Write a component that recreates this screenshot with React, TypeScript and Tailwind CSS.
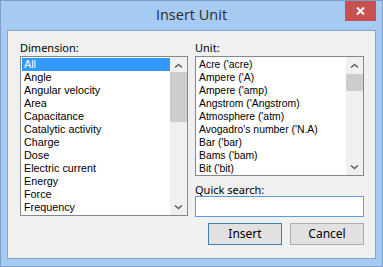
import React from 'react'

const dimensions = [
  'All', 'Angle', 'Angular velocity', 'Area', 'Capacitance', 'Catalytic activity',
  'Charge', 'Dose', 'Electric current', 'Energy', 'Force', 'Frequency',
]

const units = [
  "Acre ('acre)", "Ampere ('A)", "Ampere ('amp)", "Angstrom ('Angstrom)", "Atmosphere ('atm)",
  "Avogadro's number ('N.A)", "Bar ('bar)", "Bams ('bam)", "Bit ('bit)",
]

function Chevron({ down }: { down?: boolean }) {
  return (
    <svg width="9" height="6" viewBox="0 0 9 6">
      <path
        d={down ? 'M1 1.5 L4.5 4.5 L8 1.5' : 'M1 4.5 L4.5 1.5 L8 4.5'}
        fill="none"
        stroke="#606060"
        strokeWidth="1.6"
      />
    </svg>
  )
}

function ScrollBar({ thumbTop, thumbHeight }: { thumbTop: number; thumbHeight: number }) {
  return (
    <div className="w-[17px] bg-[#f0f0f0] flex flex-col relative">
      <div className="h-[17px] flex items-center justify-center">
        <Chevron />
      </div>
      <div className="flex-1" />
      <div className="h-[17px] flex items-center justify-center">
        <Chevron down />
      </div>
      <div
        className="absolute left-0 w-[17px] bg-[#cdcdcd]"
        style={{ top: thumbTop, height: thumbHeight }}
      />
    </div>
  )
}

function ListBox({ items, selected, height, thumbTop, thumbHeight, textClass }: {
  items: string[]; selected?: number; height: number; thumbTop: number; thumbHeight: number; textClass: string
}) {
  return (
    <div className="border border-[#828790] bg-white flex" style={{ height }}>
      <div className="flex-1 pt-px pl-px overflow-hidden">
        {items.map((it, i) => (
          <div
            key={it}
            className={`h-[13px] leading-[13px] pl-[2px] whitespace-nowrap ${textClass} ${
              i === selected ? 'bg-[#3399ff] text-white' : 'text-black'
            }`}
          >
            {it}
          </div>
        ))}
      </div>
      <ScrollBar thumbTop={thumbTop} thumbHeight={thumbHeight} />
    </div>
  )
}

export default function App() {
  return (
    <div className="w-[383px] h-[267px] bg-[#a6cbf3] border border-[#7c9fc9] flex flex-col font-['Open_Sans',sans-serif]">
      {/* Title bar */}
      <div className="h-[29px] relative flex items-center justify-center">
        <span className="text-[14.5px] text-[#2b2b2b] -mt-[1px]">Insert Unit</span>
        <div className="absolute right-[6px] top-0 w-[31px] h-[20px] bg-[#c75050] flex items-center justify-center">
          <svg width="9" height="8" viewBox="0 0 9 8">
            <path d="M1 0.5 L8 7.5 M8 0.5 L1 7.5" stroke="white" strokeWidth="2" />
          </svg>
        </div>
      </div>

      {/* Client area */}
      <div className="mx-[6px] h-[229px] border border-[#86a6cc] bg-[#f0f0f0] pl-[12px] pt-[9px] flex gap-[7px]">
        <div className="w-[168px] flex flex-col">
          <div className="text-[11px] leading-[15px] h-[16px] text-black font-['Noto_Sans',sans-serif]">Dimension:</div>
          <ListBox
            items={dimensions}
            selected={0}
            height={160}
            thumbTop={15}
            thumbHeight={50}
            textClass="text-[10.8px] font-['Liberation_Sans',sans-serif]"
          />
        </div>
        <div className="w-[169px] flex flex-col">
          <div className="text-[11px] leading-[15px] h-[16px] text-black font-['Noto_Sans',sans-serif]">Unit:</div>
          <ListBox
            items={units}
            height={120}
            thumbTop={17}
            thumbHeight={17}
            textClass="text-[10.4px] font-['Liberation_Sans',sans-serif]"
          />
          <div className="mt-[6px] text-[11px] leading-[15px] h-[14px] text-black font-['Noto_Sans',sans-serif]">Quick search:</div>
          <input className="h-[21px] border border-[#569de5] bg-white outline-none" />
          <div className="mt-[6px] flex gap-[8px] pl-[13px]">
            <button className="w-[74px] h-[22px] border border-[#3c7fb1] bg-[#e1e1e1] text-[12px] text-black font-['Noto_Sans',sans-serif]">
              Insert
            </button>
            <button className="w-[74px] h-[22px] border border-[#adadad] bg-[#e1e1e1] text-[12px] text-black font-['Noto_Sans',sans-serif]">
              Cancel
            </button>
          </div>
        </div>
      </div>
    </div>
  )
}
